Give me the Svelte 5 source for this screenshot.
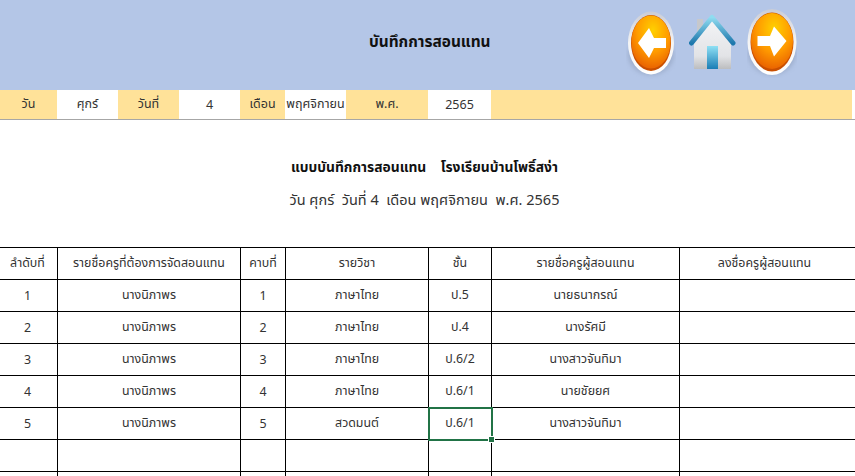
<script>
  const dateBar = [
    ['วัน', 57, true], ['ศุกร์', 61, false], ['วันที่', 61, true], ['4', 61, false],
    ['เดือน', 45, true], ['พฤศจิกายน', 61, false], ['พ.ศ.', 82, true], ['2565', 63, false]
  ];
  const head = ['ลำดับที่', 'รายชื่อครูที่ต้องการจัดสอนแทน', 'คาบที่', 'รายวิชา', 'ชั้น', 'รายชื่อครูผู้สอนแทน', 'ลงชื่อครูผู้สอนแทน'];
  const rows = [
    ['1', 'นางนิภาพร', '1', 'ภาษาไทย', 'ป.5', 'นายธนากรณ์', ''],
    ['2', 'นางนิภาพร', '2', 'ภาษาไทย', 'ป.4', 'นางรัศมี', ''],
    ['3', 'นางนิภาพร', '3', 'ภาษาไทย', 'ป.6/2', 'นางสาวจันทิมา', ''],
    ['4', 'นางนิภาพร', '4', 'ภาษาไทย', 'ป.6/1', 'นายชัยยศ', ''],
    ['5', 'นางนิภาพร', '5', 'สวดมนต์', 'ป.6/1', 'นางสาวจันทิมา', ''],
    ['', '', '', '', '', '', ''],
    ['', '', '', '', '', '', '']
  ];
</script>

<div class="sheet">
  <header class="top">
    <h1>บันทึกการสอนแทน</h1>
    <div class="icons">
      <svg class="btn" width="50" height="70" viewBox="0 0 50 70">
        <defs>
          <radialGradient id="org" cx="0.55" cy="0.28" r="0.75">
            <stop offset="0" stop-color="#ffd000"/><stop offset="0.55" stop-color="#ff9a00"/><stop offset="1" stop-color="#e85f00"/>
          </radialGradient>
          <linearGradient id="ring" x1="0" y1="0" x2="0" y2="1">
            <stop offset="0" stop-color="#c9ccd6"/><stop offset="0.5" stop-color="#f4f4f4"/><stop offset="1" stop-color="#ffffff"/>
          </linearGradient>
          <filter id="soft" x="-20%" y="-20%" width="140%" height="140%"><feGaussianBlur stdDeviation="2"/></filter>
          <filter id="aa" x="-5%" y="-5%" width="110%" height="110%"><feGaussianBlur stdDeviation="0.35"/></filter>
        </defs>
        <ellipse cx="25" cy="46" rx="23" ry="20" fill="#8c9bb8" opacity="0.5" filter="url(#soft)"/>
        <g filter="url(#aa)">
          <ellipse cx="25" cy="34" rx="23" ry="31.5" fill="url(#ring)"/>
          <ellipse cx="25" cy="34" rx="20" ry="28" fill="#c94f00"/>
          <ellipse cx="25" cy="33" rx="19.5" ry="26.5" fill="url(#org)"/>
          <polygon points="12,34 23,19 28,29 40,29 40,39 28,39 23,49" fill="#fff"/>
        </g>
      </svg>
      <svg class="home" width="50" height="56" viewBox="0 0 50 56">
        <defs>
          <linearGradient id="wall" x1="0" y1="0" x2="0" y2="1">
            <stop offset="0" stop-color="#f4f5f7"/><stop offset="0.75" stop-color="#e2e3e6"/><stop offset="1" stop-color="#bcbdbf"/>
          </linearGradient>
          <linearGradient id="roof" x1="0" y1="0" x2="0" y2="1">
            <stop offset="0" stop-color="#8fdcf0"/><stop offset="1" stop-color="#1f78ad"/>
          </linearGradient>
          <linearGradient id="door" x1="0" y1="0" x2="0" y2="1">
            <stop offset="0" stop-color="#8fe0f4"/><stop offset="1" stop-color="#1a7db5"/>
          </linearGradient>
        </defs>
        <g filter="url(#aa)">
          <rect x="10" y="5" width="6" height="18" fill="#c6c8cc"/>
          <polygon points="25,4 44,27 44,55 7,55 7,27" fill="url(#wall)"/>
          <path d="M4.5 29 L25 3.5 L46 29" fill="none" stroke="url(#roof)" stroke-width="5" stroke-linecap="round" stroke-linejoin="round"/>
          <rect x="20" y="32" width="11" height="23" fill="url(#door)"/>
        </g>
      </svg>
      <svg class="btn next" width="50" height="70" viewBox="0 0 50 70">
        <ellipse cx="25" cy="46" rx="24" ry="21" fill="#8c9bb8" opacity="0.5" filter="url(#soft)"/>
        <g filter="url(#aa)">
          <ellipse cx="25" cy="34" rx="24.5" ry="33" fill="url(#ring)"/>
          <ellipse cx="25" cy="34" rx="21.5" ry="29.5" fill="#c94f00"/>
          <ellipse cx="25" cy="33" rx="21" ry="28" fill="url(#org)"/>
          <polygon points="39.5,33 27,18.5 23,28 10.5,28 10.5,38 23,38 27,48.5" fill="#fff"/>
        </g>
      </svg>
    </div>
  </header>

  <div class="datebar">
    {#each dateBar as [label, width, shaded]}
      <div class="dcell" class:shaded style="width:{width}px">{label}</div>
    {/each}
    <div class="dfill"></div>
  </div>

  <section class="titles">
    <h2>แบบบันทึกการสอนแทน &nbsp; &nbsp;โรงเรียนบ้านโพธิ์สง่า</h2>
    <p>วัน ศุกร์ &nbsp;วันที่ 4 &nbsp;เดือน พฤศจิกายน &nbsp;พ.ศ. 2565</p>
  </section>

  <table>
    <colgroup>
      <col style="width:58px"/><col style="width:183px"/><col style="width:45px"/><col style="width:143px"/>
      <col style="width:63px"/><col style="width:188px"/><col style="width:180px"/>
    </colgroup>
    <thead>
      <tr>{#each head as h}<th>{h}</th>{/each}</tr>
    </thead>
    <tbody>
      {#each rows as row, r}
        <tr>
          {#each row as c, i}
            <td class:selected={r === 4 && i === 4}>
              {c}
              {#if r === 4 && i === 4}<span class="handle"></span>{/if}
            </td>
          {/each}
        </tr>
      {/each}
    </tbody>
  </table>
</div>

<style>
  :global(body) { margin: 0; background: #fff; }
  .sheet {
    width: 855px; height: 476px; overflow: hidden; background: #fff; color: #222;
    font-family: "Noto Sans", "Noto Sans Thai", "DejaVu Sans", Tahoma, sans-serif; font-size: 12.5px;
  }
  .top {
    height: 90px; background: #b4c6e7; display: flex; align-items: flex-start; padding-left: 369px; box-sizing: border-box;
  }
  h1 { margin: 30px 0 0; font-size: 15.4px; line-height: 24px; font-weight: 700; color: #111; width: 257px; white-space: nowrap; }
  .icons { display: flex; align-items: flex-start; }
  .btn { margin-top: 9px; }
  .home { margin-top: 14px; margin-left: 11px; }
  .next { margin-left: 10px; margin-top: 8px; }
  .datebar { height: 29px; display: flex; border-bottom: 1px solid #a6a6a6; width: 855px; }
  .dcell { display: flex; align-items: center; justify-content: center; color: #333; white-space: nowrap; }
  .shaded { background: #ffe299; }
  .dfill { width: 361px; background: #ffe299; }
  .titles { height: 127px; display: flex; flex-direction: column; align-items: center; box-sizing: border-box; padding-top: 36px; padding-right: 6px; }
  h2 { margin: 0; font-size: 13.8px; line-height: 22px; font-weight: 700; color: #111; white-space: nowrap; }
  p { margin: 10px 0 0; font-size: 14.5px; line-height: 22px; color: #333; white-space: nowrap; }
  table { border-collapse: collapse; table-layout: fixed; width: 860px; margin-left: -1px; }
  th, td {
    border: 1px solid #000; height: 31px; padding: 0; text-align: center; vertical-align: middle;
    font-size: 12.4px; font-weight: 400; color: #333; box-sizing: border-box; white-space: nowrap; position: relative;
  }
  th:first-child, td:first-child { padding-right: 2px; }
  th:last-child, td:last-child { padding-right: 10px; }
  tr { height: 32px; }
  .selected { outline: 2px solid #217346; outline-offset: -1px; }
  .handle { position: absolute; right: -4px; bottom: -4px; width: 5px; height: 5px; background: #217346; border: 1px solid #fff; }
</style>
